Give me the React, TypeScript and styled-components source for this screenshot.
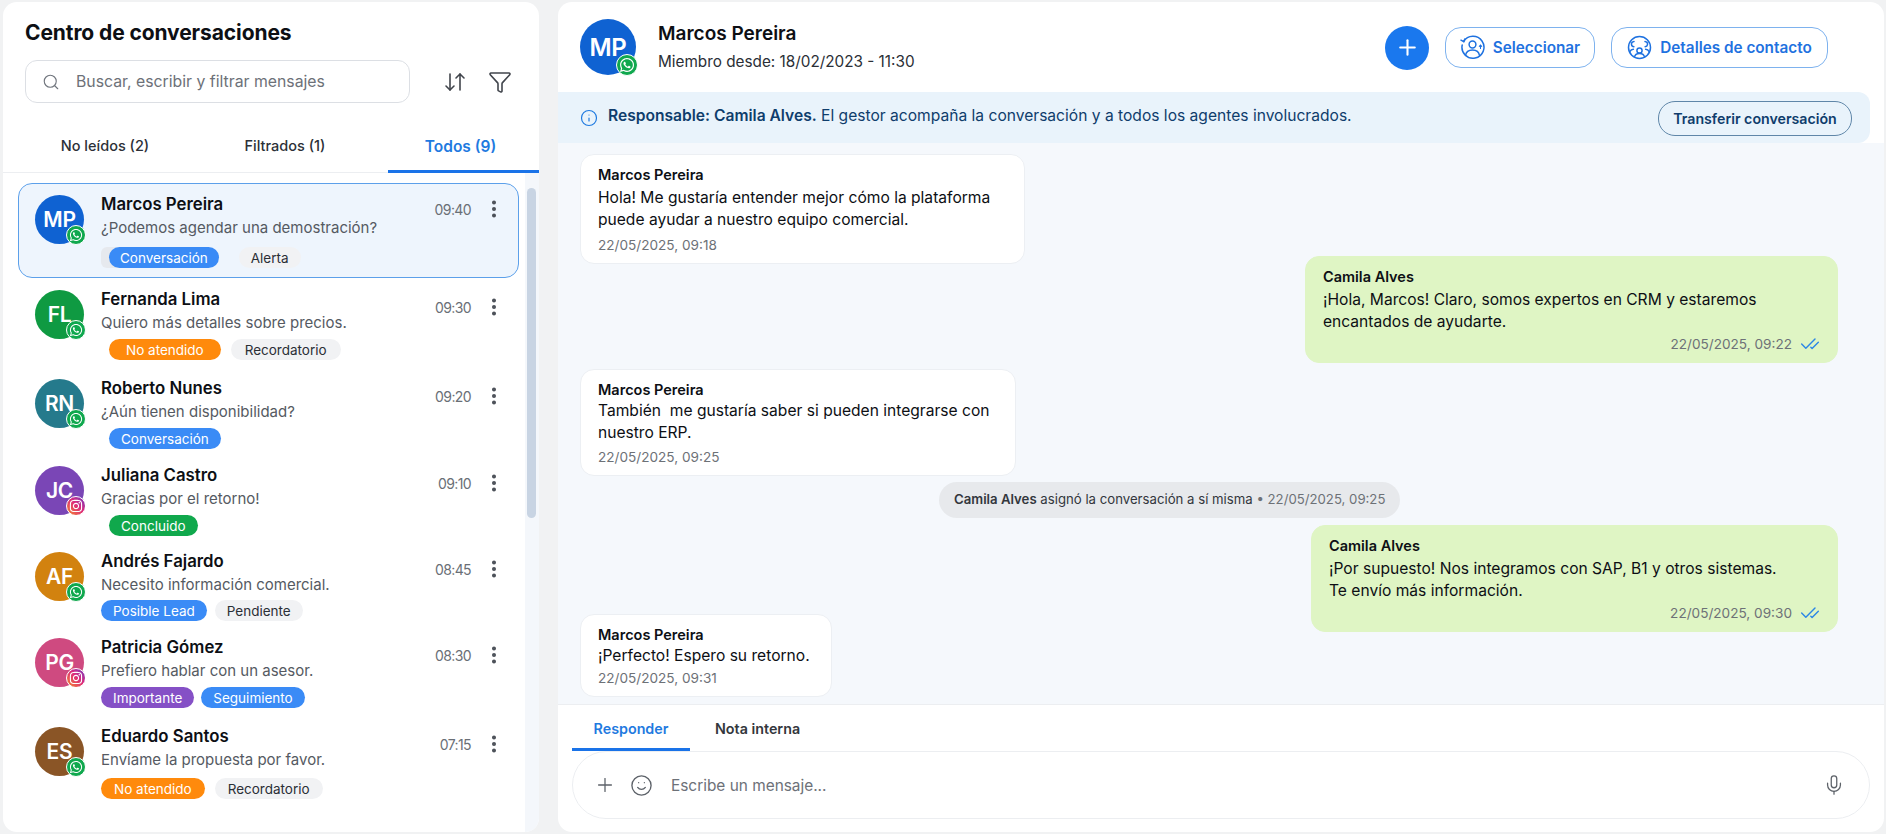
import React from "react";
import styled, { createGlobalStyle } from "styled-components";
import { ArrowDownUp, CheckCheck, EllipsisVertical, Funnel, Info, Mic, Plus, Search, Smile } from "lucide-react";
import { FaInstagram, FaWhatsapp } from "react-icons/fa";

const GlobalStyle = createGlobalStyle`
  html, body { margin: 0; padding: 0; height: 100%; }
  body { background: #f1f2f3; font-family: Inter, "Noto Sans", sans-serif; color: #0d0f14; overflow: hidden; }
  * { box-sizing: border-box; }
`;

type TagKind = "blue" | "orange" | "gray" | "green" | "purple";
type Contact = {
  initials: string; color: string; name: string; text: string; time: string; channel: "wa" | "ig";
  height: number; indent: number; tagGap: number; tagTop: number; tags: [string, TagKind, number?][];
};

const contacts: Contact[] = [
  { initials: "MP", color: "#0f62d2", name: "Marcos Pereira", text: "¿Podemos agendar una demostración?", time: "09:40", channel: "wa", height: 95, indent: 8, tagGap: 20, tagTop: 9, tags: [["Conversación", "blue", 11], ["Alerta", "gray"]] },
  { initials: "FL", color: "#0f9a42", name: "Fernanda Lima", text: "Quiero más detalles sobre precios.", time: "09:30", channel: "wa", height: 89, indent: 8, tagGap: 10, tagTop: 6, tags: [["No atendido", "orange", 17], ["Recordatorio", "gray", 14]] },
  { initials: "RN", color: "#257a8c", name: "Roberto Nunes", text: "¿Aún tienen disponibilidad?", time: "09:20", channel: "wa", height: 87, indent: 8, tagGap: 8, tagTop: 6, tags: [["Conversación", "blue"]] },
  { initials: "JC", color: "#7a46b6", name: "Juliana Castro", text: "Gracias por el retorno!", time: "09:10", channel: "ig", height: 86, indent: 8, tagGap: 8, tagTop: 6, tags: [["Concluido", "green"]] },
  { initials: "AF", color: "#d2820f", name: "Andrés Fajardo", text: "Necesito información comercial.", time: "08:45", channel: "wa", height: 86, indent: 0, tagGap: 8, tagTop: 5, tags: [["Posible Lead", "blue"], ["Pendiente", "gray"]] },
  { initials: "PG", color: "#cf4a80", name: "Patricia Gómez", text: "Prefiero hablar con un asesor.", time: "08:30", channel: "ig", height: 89, indent: 0, tagGap: 7, tagTop: 6, tags: [["Importante", "purple"], ["Seguimiento", "blue"]] },
  { initials: "ES", color: "#8a5526", name: "Eduardo Santos", text: "Envíame la propuesta por favor.", time: "07:15", channel: "wa", height: 89, indent: 0, tagGap: 10, tagTop: 8, tags: [["No atendido", "orange", 13], ["Recordatorio", "gray", 13]] },
];

const tagColors: Record<TagKind, [string, string]> = {
  blue: ["#3a8bf6", "#fff"],
  orange: ["#ff8a0c", "#fff"],
  gray: ["#f1f2f4", "#2b2f36"],
  green: ["#10a84c", "#fff"],
  purple: ["#8550c6", "#fff"],
};

const SelectIcon = () => (
  <svg width="25" height="25" viewBox="0 0 25 25" fill="none" stroke="currentColor" strokeWidth="1.5" strokeLinecap="round">
    <path d="M3.600 6.500A11 11 0 1 1 2.200 10" />
    <path d="M1 5.200l2.800 1.400 1-2.600" />
    <circle cx="12.500" cy="9.500" r="3.400" />
    <path d="M5.500 20.500c.6-4 3.400-5.600 7-5.600s6.400 1.600 7 5.600" />
    <path d="M20.500 13.500v-3M19.300 11.300l1.200-1.200 1.200 1.200" strokeWidth="1.100" />
  </svg>
);

const ContactIcon = () => (
  <svg width="25" height="25" viewBox="0 0 25 25" fill="none" stroke="currentColor" strokeWidth="1.5" strokeLinecap="round">
    <circle cx="12.500" cy="12.500" r="11" />
    <circle cx="12.500" cy="15.500" r="2.600" />
    <path d="M7.500 22c.4-2.600 2.400-3.600 5-3.600s4.600 1 5 3.600" />
    <path d="M7 6.500c-1.800.2-2.800 1.600-2.500 3.200.2 1.200 1.200 2 2.400 2M18 6.500c1.800.2 2.800 1.600 2.500 3.200-.2 1.200-1.200 2-2.400 2" />
    <path d="M3 16.500c.6-1.400 1.800-2.200 3.400-2.300M22 16.500c-.6-1.400-1.800-2.200-3.400-2.300" />
  </svg>
);

const ChannelBadge = ({ channel, large }: { channel: "wa" | "ig"; large?: boolean }) => (
  <Badge $channel={channel} $large={large}>
    {channel === "wa" ? <FaWhatsapp /> : <FaInstagram />}
  </Badge>
);

const App = () => (
  <Page>
    <GlobalStyle />
    <Sidebar>
      <Title>Centro de conversaciones</Title>
      <SearchRow>
        <SearchBox>
          <Search size={18} strokeWidth={1.5} color="#70757d" />
          <span>Buscar, escribir y filtrar mensajes</span>
        </SearchBox>
        <IconButton><ArrowDownUp size={24} strokeWidth={1.6} /></IconButton>
        <IconButton><Funnel size={24} strokeWidth={1.6} /></IconButton>
      </SearchRow>
      <ListTabs>
        <ListTab>No leídos (2)</ListTab>
        <ListTab>Filtrados (1)</ListTab>
        <ListTab $active>Todos (9)</ListTab>
      </ListTabs>
      <ListArea>
        <List>
          {contacts.map((c, i) => (
            <Row key={c.name} $active={i === 0} $height={c.height}>
              <RowAvatar>
                <Avatar $color={c.color}>{c.initials}</Avatar>
                <ChannelBadge channel={c.channel} />
              </RowAvatar>
              <RowBody>
                <RowName>{c.name}</RowName>
                <RowText>{c.text}</RowText>
                <Tags $active={i === 0} $indent={c.indent} $gap={c.tagGap} $top={c.tagTop}>
                  {c.tags.map(([label, kind, pad]) => <Tag key={label} $kind={kind} $pad={pad ?? 12}>{label}</Tag>)}
                </Tags>
              </RowBody>
              <RowMeta $active={i === 0}>
                <span>{c.time}</span>
                <EllipsisVertical size={22} strokeWidth={2.4} color="#4b5058" />
              </RowMeta>
            </Row>
          ))}
        </List>
        <ScrollTrack><ScrollThumb /></ScrollTrack>
      </ListArea>
    </Sidebar>

    <Chat>
      <ChatHeader>
        <HeaderAvatar>
          <Avatar $color="#0f62d2" $large>MP</Avatar>
          <ChannelBadge channel="wa" large />
        </HeaderAvatar>
        <HeaderInfo>
          <HeaderName>Marcos Pereira</HeaderName>
          <HeaderSub>Miembro desde: 18/02/2023 - 11:30</HeaderSub>
        </HeaderInfo>
        <HeaderActions>
          <RoundButton><Plus size={25} strokeWidth={2} /></RoundButton>
          <OutlineButton $width={150}><SelectIcon />Seleccionar</OutlineButton>
          <OutlineButton $width={217}><ContactIcon />Detalles de contacto</OutlineButton>
        </HeaderActions>
      </ChatHeader>

      <InfoBar>
        <Info size={18} strokeWidth={1.6} color="#1f7ae0" />
        <InfoText><b>Responsable: Camila Alves.</b> El gestor acompaña la conversación y a todos los agentes involucrados.</InfoText>
        <TransferButton>Transferir conversación</TransferButton>
      </InfoBar>

      <Messages>
        <Bubble $top={0} $width={445}>
          <Sender>Marcos Pereira</Sender>
          <BubbleText>Hola! Me gustaría entender mejor cómo la plataforma<br />puede ayudar a nuestro equipo comercial.</BubbleText>
          <Stamp>22/05/2025, 09:18</Stamp>
        </Bubble>
        <Bubble $mine $top={-8} $width={533} $stamp={0}>
          <Sender>Camila Alves</Sender>
          <BubbleText>¡Hola, Marcos! Claro, somos expertos en CRM y estaremos<br />encantados de ayudarte.</BubbleText>
          <Stamp $mine>22/05/2025, 09:22 <CheckCheck size={20} strokeWidth={1.7} color="#2b86e6" /></Stamp>
        </Bubble>
        <Bubble $tight $top={6} $width={436} $stamp={2}>
          <Sender>Marcos Pereira</Sender>
          <BubbleText>También  me gustaría saber si pueden integrarse con<br />nuestro ERP.</BubbleText>
          <Stamp>22/05/2025, 09:25</Stamp>
        </Bubble>
        <SystemNote><b>Camila Alves</b> asignó la conversación a sí misma <em>• 22/05/2025, 09:25</em></SystemNote>
        <Bubble $mine $top={7} $width={527} $stamp={0}>
          <Sender>Camila Alves</Sender>
          <BubbleText>¡Por supuesto! Nos integramos con SAP, B1 y otros sistemas.<br />Te envío más información.</BubbleText>
          <Stamp $mine>22/05/2025, 09:30 <CheckCheck size={20} strokeWidth={1.7} color="#2b86e6" /></Stamp>
        </Bubble>
        <Bubble $tight $top={-18} $width={252} $stamp={0}>
          <Sender>Marcos Pereira</Sender>
          <BubbleText>¡Perfecto! Espero su retorno.</BubbleText>
          <Stamp>22/05/2025, 09:31</Stamp>
        </Bubble>
      </Messages>

      <Composer>
        <ComposerTabs>
          <ComposerTab $active>Responder</ComposerTab>
          <ComposerTab>Nota interna</ComposerTab>
        </ComposerTabs>
        <InputBox>
          <Plus size={22} strokeWidth={1.4} color="#5d6269" />
          <Smile size={23} strokeWidth={1.4} color="#5d6269" />
          <Placeholder>Escribe un mensaje...</Placeholder>
          <Mic size={22} strokeWidth={1.4} color="#5d6269" />
        </InputBox>
      </Composer>
    </Chat>
  </Page>
);

export default App;

const Page = styled.div`
  display: flex;
  height: 834px;
  padding: 2px 2px 2px 3px;
`;

const Sidebar = styled.aside`
  display: flex;
  flex-direction: column;
  flex: 0 0 536px;
  margin-right: 19px;
  background: #fff;
  border-radius: 14px;
  overflow: hidden;
`;

const Title = styled.h1`
  margin: 19px 0 0 22px;
  font-size: 21px;
  line-height: 24px;
  font-weight: 700;
  letter-spacing: -0.1px;
`;

const SearchRow = styled.div`
  display: flex;
  align-items: center;
  margin: 15px 0 0 22px;
`;

const SearchBox = styled.div`
  display: flex;
  align-items: center;
  gap: 16px;
  width: 385px;
  height: 43px;
  padding: 0 16px;
  margin-right: 33px;
  border: 1px solid #dcdfe4;
  border-radius: 12px;
  color: #6d7178;
  font-size: 15.8px;
`;

const IconButton = styled.div`
  display: flex;
  width: 24px;
  margin-right: 21px;
  color: #41454c;
`;

const ListTabs = styled.div`
  display: grid;
  grid-template-columns: 204px 156px 1fr;
  height: 70px;
  padding-top: 28px;
  border-bottom: 1px solid #eceef1;
`;

const ListTab = styled.div<{ $active?: boolean }>`
  display: flex;
  justify-content: center;
  align-items: flex-start;
  margin-left: ${(p) => (p.$active ? "25px" : "0")};
  margin-bottom: -1px;
  padding: 6px ${(p) => (p.$active ? "6px" : "0")} 0 0;
  font-size: ${(p) => (p.$active ? "15.5px" : "14.5px")};
  font-weight: ${(p) => (p.$active ? 600 : 500)};
  color: ${(p) => (p.$active ? "#1f7ae0" : "#2c3037")};
  border-bottom: 3px solid ${(p) => (p.$active ? "#1a73e8" : "transparent")};
`;

const ListArea = styled.div`
  display: flex;
  flex: 1;
  min-height: 0;
`;

const List = styled.div`
  flex: 1;
  padding: 10px 6px 0 15px;
`;

const Row = styled.div<{ $active?: boolean; $height: number }>`
  display: grid;
  grid-template-columns: 66px 1fr 92px;
  height: ${(p) => p.$height}px;
  padding: 10px 0 0 16px;
  border: 1.5px solid ${(p) => (p.$active ? "#5ca0ea" : "transparent")};
  border-radius: 14px;
  background: ${(p) => (p.$active ? "#eef5fd" : "transparent")};
`;

const RowAvatar = styled.div`
  position: relative;
  width: 49px;
  height: 49px;
  margin-top: 1px;
`;

const HeaderAvatar = styled.div`
  position: relative;
  width: 56px;
  height: 56px;
`;

const Avatar = styled.div<{ $color: string; $large?: boolean }>`
  display: flex;
  justify-content: center;
  align-items: center;
  width: 100%;
  height: 100%;
  border-radius: 50%;
  background: ${(p) => p.$color};
  color: #fff;
  font-size: ${(p) => (p.$large ? "24px" : "21px")};
  font-weight: 600;
  letter-spacing: -0.3px;
`;

const Badge = styled.div<{ $channel: "wa" | "ig"; $large?: boolean }>`
  position: absolute;
  right: -2px;
  bottom: -1px;
  display: flex;
  justify-content: center;
  align-items: center;
  width: ${(p) => (p.$large ? "22px" : "20px")};
  height: ${(p) => (p.$large ? "22px" : "20px")};
  border-radius: 50%;
  border: 1.5px solid #fff;
  color: #fff;
  font-size: ${(p) => (p.$large ? "16px" : "14px")};
  background: ${(p) => (p.$channel === "wa" ? "#10a84e" : "linear-gradient(45deg, #f58a2a, #dd2a7b 55%, #6f3bc4)")};
`;

const RowBody = styled.div`
  min-width: 0;
`;

const RowName = styled.div`
  font-size: 16.8px;
  line-height: 21px;
  font-weight: 600;
`;

const RowText = styled.div`
  margin-top: 3px;
  font-size: 15px;
  line-height: 20px;
  color: #555a62;
`;

const Tags = styled.div<{ $active?: boolean; $indent: number; $gap: number; $top: number }>`
  position: relative;
  display: flex;
  gap: ${(p) => p.$gap}px;
  margin-top: ${(p) => p.$top}px;
  padding-left: ${(p) => p.$indent}px;
  ${(p) => p.$active && `
    &::before {
      content: "";
      position: absolute;
      left: 0;
      top: 0;
      width: 30px;
      height: 21px;
      border-radius: 6px;
      background: #e6e9ee;
    }
  `}
`;

const Tag = styled.span<{ $kind: TagKind; $pad: number }>`
  position: relative;
  display: inline-flex;
  align-items: center;
  height: 21px;
  padding: 0 ${(p) => p.$pad}px;
  border-radius: 11px;
  font-size: 13.5px;
  background: ${(p) => tagColors[p.$kind][0]};
  color: ${(p) => tagColors[p.$kind][1]};
`;

const RowMeta = styled.div<{ $active?: boolean }>`
  display: flex;
  justify-content: flex-end;
  align-items: center;
  gap: 12px;
  height: 22px;
  padding-right: 13px;
  margin-top: ${(p) => (p.$active ? "4px" : "7px")};
  font-size: 14px;
  letter-spacing: -0.6px;
  color: #6a6f76;
`;

const ScrollTrack = styled.div`
  flex: 0 0 14px;
  padding: 15px 3px 0 2px;
  background: #f4f7fb;
`;

const ScrollThumb = styled.div`
  height: 330px;
  border-radius: 5px;
  background: #c8d4e3;
`;

const Chat = styled.main`
  display: flex;
  flex-direction: column;
  flex: 1;
  min-width: 0;
  background: #fff;
  border-radius: 14px;
  overflow: hidden;
`;

const ChatHeader = styled.header`
  display: flex;
  align-items: center;
  flex: 0 0 90px;
  padding: 0 56px 0 22px;
`;

const HeaderInfo = styled.div`
  display: flex;
  flex-direction: column;
  gap: 5px;
  margin-left: 22px;
`;

const HeaderName = styled.div`
  font-size: 19px;
  line-height: 24px;
  font-weight: 600;
`;

const HeaderSub = styled.div`
  font-size: 15.3px;
  line-height: 22px;
  color: #2b2f36;
`;

const HeaderActions = styled.div`
  display: flex;
  align-items: center;
  gap: 16px;
  margin-left: auto;
`;

const RoundButton = styled.button`
  display: flex;
  justify-content: center;
  align-items: center;
  width: 44px;
  height: 44px;
  padding: 0;
  margin-top: 1px;
  border: none;
  border-radius: 50%;
  background: #1a78ee;
  color: #fff;
`;

const OutlineButton = styled.button<{ $width: number }>`
  display: flex;
  justify-content: center;
  align-items: center;
  gap: 8px;
  width: ${(p) => p.$width}px;
  height: 41px;
  padding: 0;
  border: 1.5px solid #7eb2ee;
  border-radius: 16px;
  background: #fff;
  color: #1f72e0;
  font-family: inherit;
  font-size: 15.3px;
  font-weight: 600;
`;

const InfoBar = styled.div`
  display: flex;
  align-items: center;
  flex: 0 0 51px;
  padding: 0 18px 0 22px;
  margin-right: 14px;
  border-radius: 0 12px 12px 0;
  background: #e9f3fb;
`;

const InfoText = styled.div`
  margin-left: 10px;
  margin-top: -4px;
  font-size: 15.6px;
  color: #0f3d6c;
  b { font-weight: 600; }
`;

const TransferButton = styled.button`
  margin-left: auto;
  margin-top: 2px;
  height: 35px;
  width: 194px;
  padding: 0;
  border: 1.5px solid #5f86a8;
  border-radius: 17px;
  background: transparent;
  color: #0f3d6c;
  font-family: inherit;
  font-size: 14.2px;
  font-weight: 600;
  white-space: nowrap;
`;

const Messages = styled.section`
  display: flex;
  flex-direction: column;
  flex: 1;
  min-height: 0;
  padding: 11px 46px 0 22px;
  overflow: hidden;
  background: #f5f8fc;
`;

const Bubble = styled.div<{ $mine?: boolean; $tight?: boolean; $top: number; $width: number; $stamp?: number }>`
  flex-shrink: 0;
  width: ${(p) => p.$width}px;
  margin-top: ${(p) => p.$top}px;
  align-self: ${(p) => (p.$mine ? "flex-end" : "flex-start")};
  padding: 9px 17px 7px 17px;
  border-radius: 14px;
  background: ${(p) => (p.$mine ? "#dff5c4" : "#fff")};
  border: 1px solid ${(p) => (p.$mine ? "#dff5c4" : "#eceff3")};

  & > div:nth-child(2) { margin-top: ${(p) => (p.$tight ? "0" : "2px")}; }
  & > div:nth-child(3) { margin-top: ${(p) => p.$stamp ?? 3}px; }
`;

const Sender = styled.div`
  font-size: 14.5px;
  line-height: 21px;
  font-weight: 600;
`;

const BubbleText = styled.div`
  font-size: 15.6px;
  line-height: 22px;
  white-space: pre-wrap;
`;

const Stamp = styled.div<{ $mine?: boolean }>`
  display: flex;
  align-items: center;
  justify-content: ${(p) => (p.$mine ? "flex-end" : "flex-start")};
  gap: 8px;
  font-size: 13.6px;
  line-height: 22px;
  color: #6d7177;
`;

const SystemNote = styled.div`
  align-self: flex-start;
  flex-shrink: 0;
  height: 36px;
  margin: 6px 0 0 359px;
  padding: 0 15px;
  border-radius: 18px;
  background: #e7e9ec;
  font-size: 13.2px;
  line-height: 35px;
  color: #33373d;
  b { font-weight: 600; }
  em { font-style: normal; color: #6d7177; }
`;

const Composer = styled.footer`
  flex: 0 0 128px;
  padding: 0 14px 0 14px;
  border-top: 1px solid #eceef1;
`;

const ComposerTabs = styled.div`
  display: flex;
  height: 46px;
`;

const ComposerTab = styled.div<{ $active?: boolean }>`
  display: flex;
  justify-content: center;
  align-items: center;
  width: ${(p) => (p.$active ? "118px" : "auto")};
  padding: 4px 0 0;
  margin-left: ${(p) => (p.$active ? "0" : "25px")};
  border-bottom: 3px solid ${(p) => (p.$active ? "#1a73e8" : "transparent")};
  font-size: 14.3px;
  font-weight: 600;
  color: ${(p) => (p.$active ? "#1f7ae0" : "#33373d")};
`;

const InputBox = styled.div`
  display: flex;
  align-items: center;
  gap: 14px;
  height: 68px;
  padding: 0 24px 0 21px;
  border: 1.5px solid #eceef1;
  border-radius: 34px;
  background: #fff;
`;

const Placeholder = styled.span`
  flex: 1;
  margin-left: 4px;
  font-size: 15.4px;
  color: #6d7178;
`;
